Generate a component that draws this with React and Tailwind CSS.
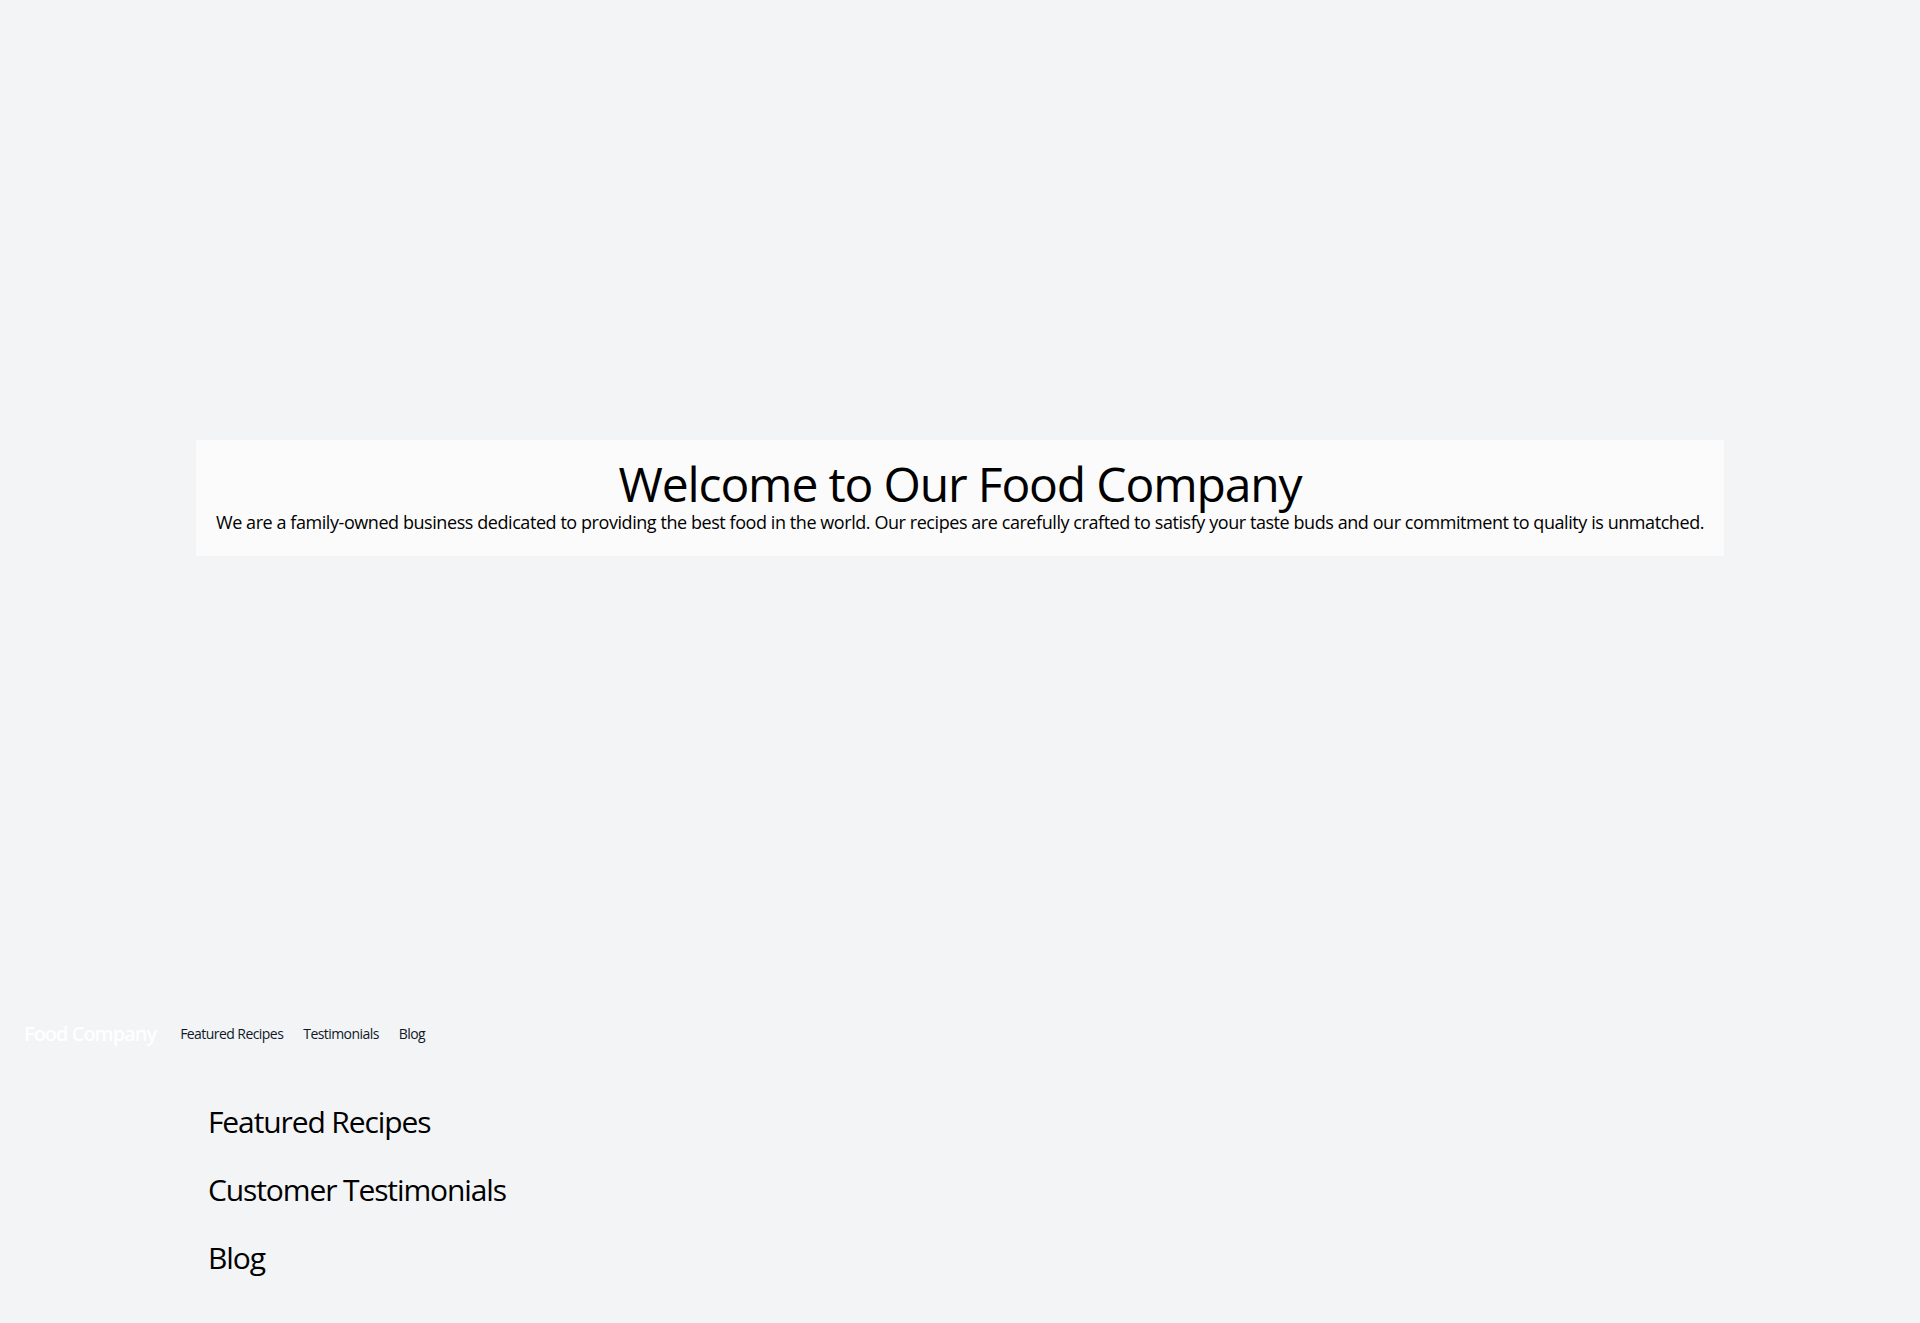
export default function App() {
  return (
    <div className="min-h-screen bg-gray-100 text-black font-['Open_Sans',sans-serif]">
      <header className="flex h-[996px] items-center justify-center">
        <div className="bg-[#fbfbfb] p-5 text-center">
          <h1 className="text-5xl leading-[48px] tracking-[-0.024em]">Welcome to Our Food Company</h1>
          <p className="text-lg whitespace-nowrap tracking-[-0.024em]">
            We are a family-owned business dedicated to providing the best food in the world. Our recipes are carefully crafted to satisfy your taste buds and our commitment to quality is unmatched.
          </p>
        </div>
      </header>

      <nav className="flex items-center p-6 tracking-[-0.035em]">
        <a href="#" className="text-xl font-semibold text-white tracking-[-0.05em]">Food Company</a>
        <div className="ml-6 flex gap-5 text-sm text-gray-900">
          <a href="#featured">Featured Recipes</a>
          <a href="#testimonials">Testimonials</a>
          <a href="#blog">Blog</a>
        </div>
      </nav>

      <main className="pt-4">
        <section id="featured" className="container mx-auto p-4">
          <h2 className="text-3xl tracking-[-0.037em]">Featured Recipes</h2>
        </section>
        <section id="testimonials" className="container mx-auto p-4">
          <h2 className="text-3xl tracking-[-0.037em]">Customer Testimonials</h2>
        </section>
        <section id="blog" className="container mx-auto p-4">
          <h2 className="text-3xl tracking-[-0.037em]">Blog</h2>
        </section>
      </main>
    </div>
  );
}
